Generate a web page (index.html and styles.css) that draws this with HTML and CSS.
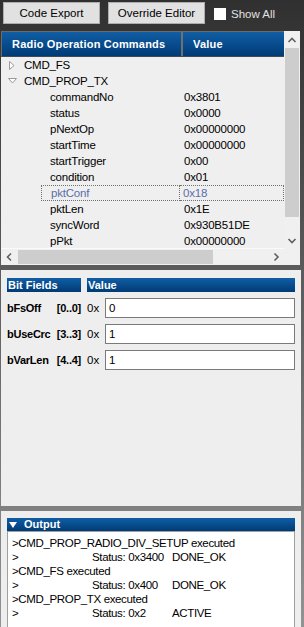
FILE: index.html
```html
<!DOCTYPE html>
<html>
<head>
<meta charset="utf-8">
<link rel="stylesheet" href="styles.css">
</head>
<body>
<div class="app">
  <div class="toolbar">
    <button class="btn btn1">Code Export</button>
    <button class="btn btn2">Override Editor</button>
    <label class="chk"><span class="box"></span><span class="chk-label">Show All</span></label>
  </div>

  <div class="tree-panel">
    <div class="tree-main">
      <div class="tree-head">
        <div class="th th1">Radio Operation Commands</div>
        <div class="th-sep"></div>
        <div class="th th2">Value</div>
      </div>
      <div class="rows">
        <div class="row l0">
          <div class="c1"><svg class="tri" width="9" height="16" viewBox="0 0 9 16"><polygon points="1.5,4.5 6,8.5 1.5,12.5" fill="#fff" stroke="#9a9a9a" stroke-width="1"/></svg><span>CMD_FS</span></div>
          <div class="c2"></div>
        </div>
        <div class="row l0">
          <div class="c1"><svg class="tri" width="9" height="16" viewBox="0 0 9 16"><polygon points="0.5,5.5 8.5,5.5 4.5,10" fill="#fff" stroke="#9a9a9a" stroke-width="1"/></svg><span>CMD_PROP_TX</span></div>
          <div class="c2"></div>
        </div>
        <div class="row l1"><div class="c1">commandNo</div><div class="c2">0x3801</div></div>
        <div class="row l1"><div class="c1">status</div><div class="c2">0x0000</div></div>
        <div class="row l1"><div class="c1">pNextOp</div><div class="c2">0x00000000</div></div>
        <div class="row l1"><div class="c1">startTime</div><div class="c2">0x00000000</div></div>
        <div class="row l1"><div class="c1">startTrigger</div><div class="c2">0x00</div></div>
        <div class="row l1"><div class="c1">condition</div><div class="c2">0x01</div></div>
        <div class="row l1 sel"><div class="c1">pktConf</div><div class="c2">0x18</div></div>
        <div class="row l1"><div class="c1">pktLen</div><div class="c2">0x1E</div></div>
        <div class="row l1"><div class="c1">syncWord</div><div class="c2">0x930B51DE</div></div>
        <div class="row l1"><div class="c1">pPkt</div><div class="c2">0x00000000</div></div>
      </div>
    </div>
    <div class="vscroll">
      <div class="arrow"><svg width="16" height="17" viewBox="0 0 16 17"><polyline points="4.5,11 8,7.5 11.5,11" fill="none" stroke="#606060" stroke-width="1.6"/></svg></div>
      <div class="vthumb"></div>
      <div class="vtrack"></div>
      <div class="arrow"><svg width="16" height="16" viewBox="0 0 16 16"><polyline points="4.5,6 8,9.5 11.5,6" fill="none" stroke="#606060" stroke-width="1.6"/></svg></div>
    </div>
    <div class="hscroll">
      <div class="harrow"><svg width="17" height="16" viewBox="0 0 17 16"><polyline points="10,4.5 6.5,8 10,11.5" fill="none" stroke="#606060" stroke-width="1.6"/></svg></div>
      <div class="hthumb"></div>
      <div class="htrack"></div>
      <div class="harrow"><svg width="16" height="16" viewBox="0 0 16 16"><polyline points="6.5,4.5 10,8 6.5,11.5" fill="none" stroke="#606060" stroke-width="1.6"/></svg></div>
    </div>
    <div class="corner"></div>
  </div>

  <div class="bit-panel">
    <div class="bit-head">
      <div class="bh">Bit Fields</div>
      <div class="bh">Value</div>
    </div>
    <div class="bit-row">
      <div class="blabel"><span>bFsOff</span><span>[0..0]</span></div>
      <div class="hex">0x</div>
      <div class="inp">0</div>
    </div>
    <div class="bit-row">
      <div class="blabel"><span>bUseCrc</span><span>[3..3]</span></div>
      <div class="hex">0x</div>
      <div class="inp">1</div>
    </div>
    <div class="bit-row">
      <div class="blabel"><span>bVarLen</span><span>[4..4]</span></div>
      <div class="hex">0x</div>
      <div class="inp">1</div>
    </div>
  </div>

  <div class="out-panel">
    <div class="out-head"><svg class="out-tri" width="8" height="8" viewBox="0 0 8 8"><polygon points="0,1 8,1 4,7" fill="#fff"/></svg><span>Output</span></div>
    <div class="out-box">
      <div class="ln">&gt;CMD_PROP_RADIO_DIV_SETUP executed</div>
      <div class="ln"><span class="p1">&gt;</span><span class="p2">Status: 0x3400</span><span>DONE_OK</span></div>
      <div class="ln">&gt;CMD_FS executed</div>
      <div class="ln"><span class="p1">&gt;</span><span class="p2">Status: 0x400</span><span>DONE_OK</span></div>
      <div class="ln">&gt;CMD_PROP_TX executed</div>
      <div class="ln"><span class="p1">&gt;</span><span class="p2">Status: 0x2</span><span>ACTIVE</span></div>
    </div>
  </div>
</div>
</body>
</html>
```

FILE: styles.css
```css
* { box-sizing: border-box; }
html, body { margin: 0; padding: 0; }
body {
  width: 304px;
  height: 627px;
  overflow: hidden;
  background: linear-gradient(#303030, #939393);
  font-family: "Liberation Sans", Arial, sans-serif;
  font-size: 11px;
  color: #000;
}
.app { display: flex; flex-direction: column; height: 627px; }

/* toolbar */
.toolbar {
  height: 31px;
  display: flex;
  align-items: flex-start;
  padding: 2px 0 0 3px;
}
.btn {
  height: 22px;
  margin: 0;
  padding: 0;
  background: #e1e1e1;
  border: 1px solid #adadad;
  border-radius: 0;
  font-family: "Liberation Sans", Arial, sans-serif;
  font-size: 11.5px;
  color: #000;
}
.btn1 { width: 97px; }
.btn2 { width: 97px; margin-left: 8px; }
.chk { display: flex; align-items: center; margin-left: 9px; height: 22px; }
.box { width: 12px; height: 12px; background: #fff; margin-top: 2px; }
.chk-label { margin-left: 5px; color: #e0e0e0; font-size: 11.5px; margin-top: 2px; }

/* tree panel */
.tree-panel {
  margin-left: 1px;
  width: 299px;
  height: 234px;
  display: grid;
  grid-template-columns: 283px 16px;
  grid-template-rows: 218px 16px;
  background: #f0f0f0;
}
.tree-main { background: #efefef; overflow: hidden; border-bottom: 1px solid #fafafa; }
.tree-head {
  height: 26px;
  display: grid;
  grid-template-columns: 179px 2px 102px;
  border-top: 1px solid #6b6b6b;
  border-bottom: 1px solid #3c4a5a;
  border-left: 1px solid #6b6b6b;
}
.th {
  background: linear-gradient(#115ea5, #003b76);
  color: #fff;
  font-weight: bold;
  font-size: 11px;
  letter-spacing: 0.2px;
  line-height: 24px;
}
.th1 { padding-left: 10px; }
.th2 { padding-left: 10px; }
.th-sep { background: #707070; }

.rows { display: flex; flex-direction: column; }
.row {
  height: 16px;
  display: grid;
  grid-template-columns: 179px 104px;
  line-height: 16px;
  font-size: 11.5px;
  letter-spacing: -0.2px;
  white-space: nowrap;
}
.row .c2 { padding-left: 4px; }
.l0 .c1 { display: flex; align-items: center; padding-left: 7px; }
.l0 .tri { display: block; margin-right: 7px; }
.l1 .c1 { padding-left: 49px; }
.row.sel { color: #5a6ea8; line-height: 14px; }
.row.sel .c1 {
  margin-left: 40px;
  padding-left: 9px;
  border: 1px dotted #707070;
}
.row.sel .c2 {
  border-top: 1px dotted #707070;
  border-bottom: 1px dotted #707070;
  border-right: 1px dotted #707070;
  padding-left: 3px;
}

.vscroll { display: flex; flex-direction: column; background: #f0f0f0; }
.vscroll .arrow { height: 17px; flex: none; }
.vscroll .arrow:last-child { height: 16px; }
.vscroll svg, .hscroll svg { display: block; }
.vthumb { height: 169px; background: #cdcdcd; margin: 0 1px; flex: none; }
.vtrack { flex: 1; }
.hscroll { display: flex; background: #f0f0f0; }
.harrow { width: 17px; flex: none; }
.harrow:last-child { width: 16px; }
.hthumb { width: 195px; background: #cdcdcd; margin: 1px 0; flex: none; }
.htrack { flex: 1; }
.corner { background: #f0f0f0; }

/* bit fields */
.bit-panel {
  margin: 5px 0 0 1px;
  width: 300px;
  height: 236px;
  background: #eeeeee;
  padding: 8px 6px 0 6px;
  display: flex;
  flex-direction: column;
  gap: 6px;
}
.bit-head {
  display: grid;
  grid-template-columns: 74px 208px;
  column-gap: 6px;
  height: 14px;
}
.bh {
  background: linear-gradient(#115ea5, #003b76);
  color: #fff;
  font-weight: bold;
  font-size: 11px;
  line-height: 14px;
  padding-left: 1px;
}
.bit-row {
  display: grid;
  grid-template-columns: 74px 24px 190px;
  height: 20px;
  align-items: center;
}
.blabel {
  display: flex;
  justify-content: space-between;
  font-weight: bold;
  font-size: 11px;
  letter-spacing: -0.25px;
  white-space: nowrap;
}
.hex { padding-left: 6px; font-size: 11.5px; }
.inp {
  height: 20px;
  background: #fff;
  border: 1px solid #7a7a7a;
  padding-left: 3px;
  line-height: 18px;
  font-size: 11.5px;
}

/* output */
.out-panel {
  margin: 5px 0 0 1px;
  width: 300px;
  flex: 1;
  background: #eeeeee;
  padding: 7px 6px 0 6px;
  display: flex;
  flex-direction: column;
}
.out-head {
  height: 13px;
  background: linear-gradient(#115ea5, #003b76);
  color: #fff;
  font-weight: bold;
  font-size: 11px;
  line-height: 13px;
  display: flex;
  align-items: center;
}
.out-tri { display: block; margin-left: 2px; margin-right: 7px; }
.out-box {
  flex: 1;
  background: #fff;
  border: 1px solid #a0a0a0;
  border-bottom: none;
  padding: 4px 0 0 4px;
}
.ln {
  height: 14px;
  line-height: 14px;
  font-size: 11.5px;
  letter-spacing: -0.35px;
  white-space: nowrap;
}
.p1 { display: inline-block; width: 80px; }
.p2 { display: inline-block; width: 80px; }
```
